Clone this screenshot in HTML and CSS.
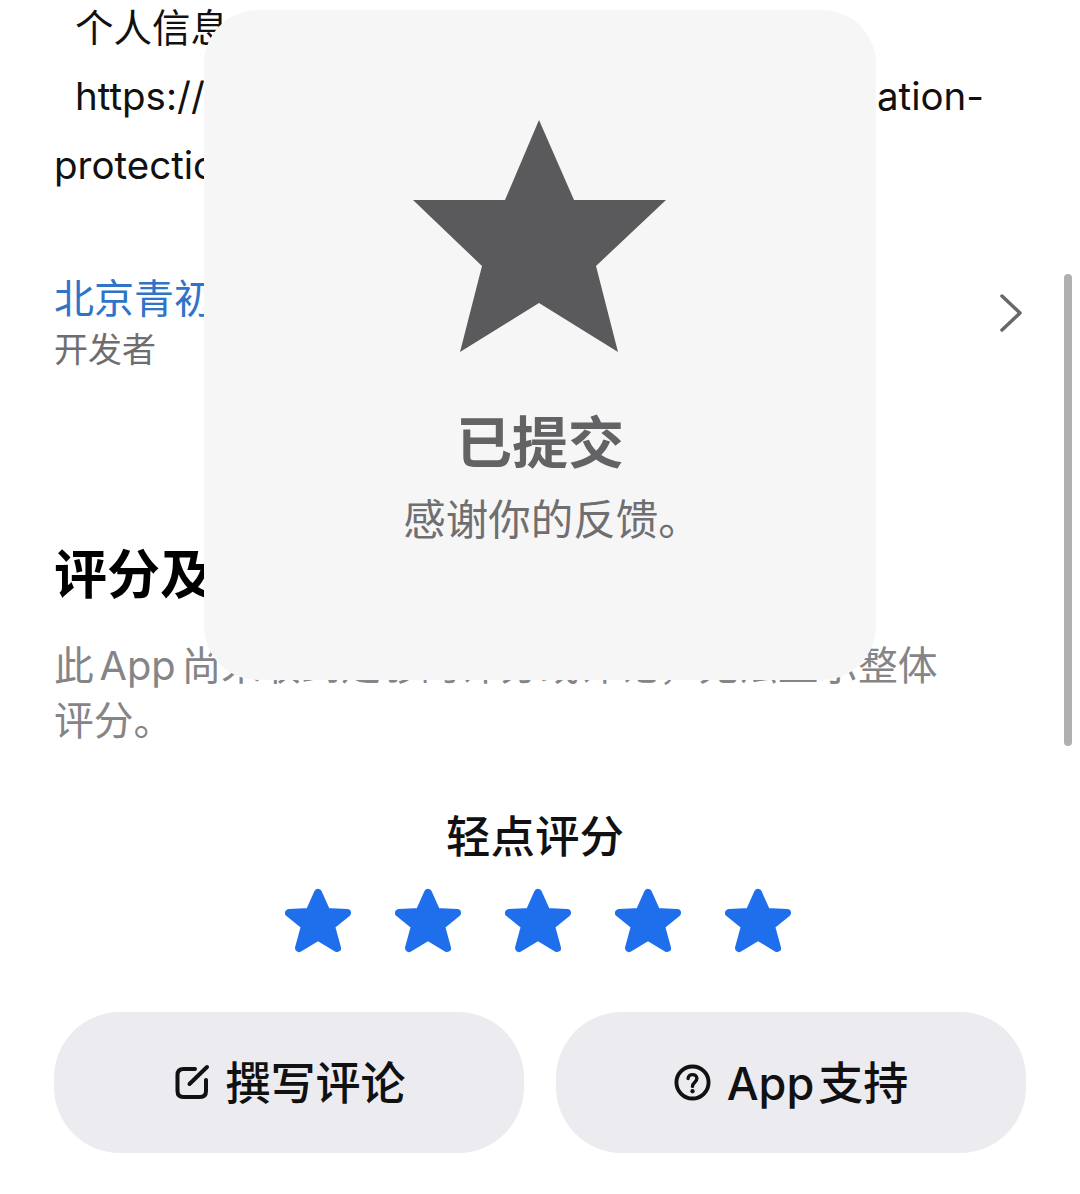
FILE: index.html
```html
<!DOCTYPE html>
<html lang="zh-CN">
<head>
  <meta charset="UTF-8">
  <meta name="viewport" content="width=device-width, initial-scale=1.0">
  <title>评分及评论</title>
  <link rel="stylesheet" href="styles.css">
</head>
<body>

  <div class="page">
    <p class="policy">
      <span class="policy-line indent">个人信息：</span>
      <span class="policy-line indent url">https://www.qingchu.com/t/personal-information-</span>
      <span class="policy-line">protection</span>
    </p>

    <div class="developer">
      <div class="developer-text">
        <div class="developer-name">北京青初科技有限公司</div>
        <div class="developer-label">开发者</div>
      </div>
      <svg class="chevron" viewBox="0 0 24 38">
        <path d="M3 2 L21 19 L3 36" />
      </svg>
    </div>

    <h2 class="section-title">评分及评论</h2>
    <p class="section-note">此 App 尚未收到足够的评分或评论，无法显示整体评分。</p>

    <div class="tap-title">轻点评分</div>
    <div class="tap-stars">
      <svg class="tap-star" viewBox="0 0 66 66"><polygon points="33,6 41.5,25 62,26 46,39 52,61 33,49.5 14,61 20,39 4,26 24.5,25" /></svg>
      <svg class="tap-star" viewBox="0 0 66 66"><polygon points="33,6 41.5,25 62,26 46,39 52,61 33,49.5 14,61 20,39 4,26 24.5,25" /></svg>
      <svg class="tap-star" viewBox="0 0 66 66"><polygon points="33,6 41.5,25 62,26 46,39 52,61 33,49.5 14,61 20,39 4,26 24.5,25" /></svg>
      <svg class="tap-star" viewBox="0 0 66 66"><polygon points="33,6 41.5,25 62,26 46,39 52,61 33,49.5 14,61 20,39 4,26 24.5,25" /></svg>
      <svg class="tap-star" viewBox="0 0 66 66"><polygon points="33,6 41.5,25 62,26 46,39 52,61 33,49.5 14,61 20,39 4,26 24.5,25" /></svg>
    </div>

    <div class="actions">
      <button class="action-btn">
        <svg class="action-icon" viewBox="0 0 37 37">
          <path class="icon-line" d="M23 5 H11.5 Q5.5 5 5.5 11 V27 Q5.5 33 11.5 33 H28 Q34 33 34 27 V16" />
          <path class="icon-line" d="M17.5 20 L35 3" />
        </svg>
        撰写评论
      </button>
      <button class="action-btn">
        <svg class="action-icon" viewBox="0 0 38 38">
          <circle class="icon-line" cx="19" cy="19" r="16.5" />
          <path class="icon-line thin" d="M14.5 15 C14.5 9.5 23.5 9.5 23.5 15 C23.5 18.5 19 19 19 23" />
          <circle class="icon-dot" cx="19" cy="28" r="2.2" />
        </svg>
        App 支持
      </button>
    </div>
  </div>

  <div class="scroll-thumb"></div>

  <!-- Submitted overlay -->
  <div class="hud">
    <svg class="hud-star" viewBox="0 0 254 232">
      <polygon points="126,0 161,80 253,80 183,146 205,232 126,183 47,232 69,146 0,80 92,80" />
    </svg>
    <div class="hud-title">已提交</div>
    <div class="hud-text">感谢你的反馈。</div>
  </div>

</body>
</html>
```

FILE: styles.css
```css
body {
  font-family: Inter, "Noto Sans CJK SC", sans-serif;
  background-color: #ffffff;
  color: #000000;
  margin: 0;
  height: 1194px;
  overflow: hidden;
}

.page {
  padding: 0 54px;
}

.policy {
  margin: -6px 0 0;
  font-size: 38.5px;
  line-height: 68.5px;
  color: #111111;
}

.policy-line {
  display: block;
  white-space: nowrap;
}

.indent {
  padding-left: 21px;
}

.url {
  margin: -1px 0 1px;
}

.developer {
  display: flex;
  align-items: flex-start;
  justify-content: space-between;
  margin-top: 73.5px;
}

.developer-name {
  font-size: 40px;
  line-height: 52px;
  color: #2f74c8;
}

.developer-label {
  font-size: 34px;
  line-height: 49px;
  color: #6e6e70;
}

.chevron {
  width: 24px;
  height: 38px;
  margin: 21px 3px 0 0;
  fill: none;
  stroke: #68686a;
  stroke-width: 3.5;
  stroke-linecap: round;
  stroke-linejoin: round;
}

.section-title {
  margin: 166px 0 0;
  font-size: 53px;
  line-height: 70px;
  font-weight: 700;
}

.section-note {
  margin: 27.5px 0 0;
  width: 890px;
  font-size: 39.8px;
  line-height: 55px;
  word-spacing: -5.5px;
  color: #858587;
}

.tap-title {
  margin-top: 59.5px;
  padding-right: 10px;
  text-align: center;
  font-size: 44.5px;
  line-height: 60px;
  font-weight: 500;
  color: #111111;
}

.tap-stars {
  display: flex;
  justify-content: center;
  gap: 44px;
  margin-top: 20px;
  padding-right: 4px;
}

.tap-star {
  width: 66px;
  height: 66px;
  fill: #1f6fec;
  stroke: #1f6fec;
  stroke-width: 8;
  stroke-linejoin: round;
}

.actions {
  display: flex;
  gap: 32px;
  margin-top: 59px;
}

.action-btn {
  flex: 1;
  height: 141px;
  padding: 0 0 4px;
  display: flex;
  align-items: center;
  justify-content: center;
  gap: 16px;
  border: none;
  border-radius: 66px;
  background-color: #ebebf0;
  color: #111111;
  font-family: inherit;
  font-size: 45px;
  font-weight: 500;
  word-spacing: -8px;
}

.action-icon {
  width: 37px;
  height: 37px;
  margin-top: 4px;
  overflow: visible;
}

.icon-line {
  fill: none;
  stroke: #111111;
  stroke-width: 4;
  stroke-linecap: round;
}

.thin {
  stroke-width: 3.5;
}

.icon-dot {
  fill: #111111;
}

.scroll-thumb {
  position: absolute;
  left: 1064px;
  top: 274px;
  width: 8px;
  height: 472px;
  border-radius: 4px;
  background-color: #b0b0b0;
}

.hud {
  position: absolute;
  left: 204px;
  top: 10px;
  width: 672px;
  height: 670px;
  box-sizing: border-box;
  padding-top: 110px;
  display: flex;
  flex-direction: column;
  align-items: center;
  border-radius: 54px;
  background-color: #f6f6f7;
}

.hud-star {
  width: 254px;
  height: 232px;
  fill: #5a5a5c;
}

.hud-title {
  margin-top: 53px;
  font-size: 56px;
  line-height: 76px;
  font-weight: 700;
  color: #636365;
}

.hud-text {
  margin-top: 11px;
  padding-left: 24px;
  font-size: 42.5px;
  line-height: 56px;
  color: #6f6f71;
}
```
